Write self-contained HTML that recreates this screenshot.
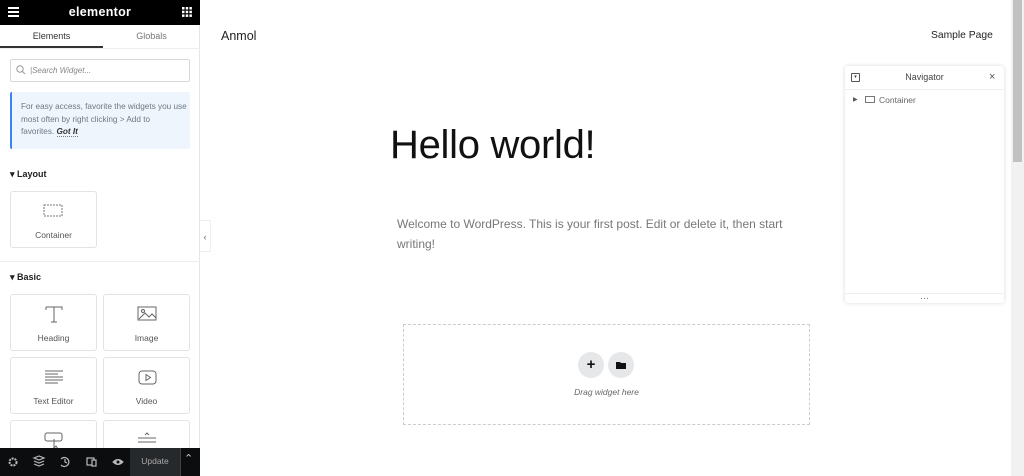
<!DOCTYPE html>
<html><head><style>
*{box-sizing:border-box;margin:0;padding:0}
body{width:1024px;height:476px;overflow:hidden;background:#fff;font-family:"Liberation Sans",sans-serif;position:relative;color:#333}
.a{position:absolute}
.card{position:absolute;width:87px;height:57px;border:1px solid #e3e3e3;border-radius:3px;background:#fff;text-align:center;font-size:8.5px;color:#555}
.card .l{position:absolute;left:0;right:0;top:38px}
.card svg{position:absolute;left:32px;top:8px}
</style></head><body>
<div class="a" style="left:0;top:0;width:200px;height:476px;background:#fff;border-right:1px solid #e6e6e6"></div>
<div class="a" style="left:0;top:0;width:200px;height:25px;background:#000"></div>
<div class="a" style="left:8px;top:7px;width:11px;height:2px;background:#fff;box-shadow:0 4px 0 #fff,0 8px 0 #fff"></div>
<div class="a" style="left:0;top:5px;width:200px;text-align:center;color:#fff;font-weight:bold;font-size:12.5px;letter-spacing:.3px">elementor</div>
<svg class="a" style="left:182px;top:7px" width="10" height="10"><g fill="#fff"><rect x="0" y="0" width="2.5" height="2.5"/><rect x="3.7" y="0" width="2.5" height="2.5"/><rect x="7.4" y="0" width="2.5" height="2.5"/><rect x="0" y="3.7" width="2.5" height="2.5"/><rect x="3.7" y="3.7" width="2.5" height="2.5"/><rect x="7.4" y="3.7" width="2.5" height="2.5"/><rect x="0" y="7.4" width="2.5" height="2.5"/><rect x="3.7" y="7.4" width="2.5" height="2.5"/><rect x="7.4" y="7.4" width="2.5" height="2.5"/></g></svg>
<div class="a" style="left:0;top:31px;width:103px;text-align:center;font-size:9px;color:#333">Elements</div>
<div class="a" style="left:103px;top:31px;width:97px;text-align:center;font-size:9px;color:#777">Globals</div>
<div class="a" style="left:0;top:46px;width:103px;height:2px;background:#333"></div>
<div class="a" style="left:0;top:48px;width:200px;height:1px;background:#eee"></div>
<div class="a" style="left:10px;top:59px;width:180px;height:23px;border:1px solid #d5d8dc;border-radius:2px"></div>
<svg class="a" style="left:16px;top:65px" width="10" height="10"><circle cx="4" cy="4" r="3.2" fill="none" stroke="#999" stroke-width="1"/><line x1="6.5" y1="6.5" x2="9" y2="9" stroke="#999"/></svg>
<div class="a" style="left:30px;top:66px;font-size:8px;color:#888;font-style:italic">|Search Widget...</div>
<div class="a" style="left:10px;top:92px;width:180px;height:57px;background:#eff5fd;border-left:2px solid #3e84f1;border-radius:2px"></div>
<div class="a" style="left:21px;top:101px;white-space:nowrap;font-size:8.2px;line-height:12.5px;color:#6d7882">For easy access, favorite the widgets you use<br>most often by right clicking &gt; Add to<br>favorites. <b style="color:#333;font-style:italic;border-bottom:1px dotted #3e84f1">Got It</b></div>
<div class="a" style="left:10px;top:169px;font-size:9px;font-weight:bold;color:#222">▾ Layout</div>
<div class="card" style="left:10px;top:191px"><svg width="22" height="14" style="left:32px;top:12px"><rect x="1" y="1" width="18" height="11" fill="none" stroke="#777" stroke-width="1" stroke-dasharray="2 1"/></svg><div class="l">Container</div></div>
<div class="a" style="left:0;top:261px;width:200px;height:1px;background:#eee"></div>
<div class="a" style="left:10px;top:272px;font-size:9px;font-weight:bold;color:#222">▾ Basic</div>
<div class="card" style="left:10px;top:294px"><svg width="22" height="20" style="left:32px;top:9px"><path d="M3 3H19V6M3 3V6M11 3V18M8 18H14" fill="none" stroke="#666" stroke-width="1"/></svg><div class="l">Heading</div></div>
<div class="card" style="left:103px;top:294px"><svg width="22" height="18" style="left:33px;top:10px"><rect x="1" y="2" width="18" height="13" fill="none" stroke="#666"/><path d="M2 14L8 8L12 12L15 9L19 13" fill="none" stroke="#666"/><circle cx="6" cy="6" r="1.5" fill="none" stroke="#666"/></svg><div class="l">Image</div></div>
<div class="card" style="left:10px;top:357px"><svg width="22" height="18" style="left:33px;top:11px"><path d="M1 2H19M1 5H14M1 8H19M1 11H19M1 14H14" stroke="#666" stroke-width="1"/></svg><div class="l">Text Editor</div></div>
<div class="card" style="left:103px;top:357px"><svg width="22" height="18" style="left:34px;top:11px"><rect x="1" y="2" width="17" height="13" rx="3" fill="none" stroke="#666"/><path d="M8 5.5L12.5 8.5L8 11.5Z" fill="none" stroke="#666"/></svg><div class="l">Video</div></div>
<div class="card" style="left:10px;top:420px;height:40px"><svg width="22" height="20" style="left:33px;top:10px"><rect x="1" y="2" width="17" height="8" rx="2" fill="none" stroke="#666"/><path d="M10 8V17L12 15L14 18" fill="none" stroke="#666"/></svg></div>
<div class="card" style="left:103px;top:420px;height:40px"><svg width="22" height="20" style="left:33px;top:9px"><path d="M1 8H19M1 12H19M8 5L10 3L12 5" fill="none" stroke="#666"/></svg></div>
<div class="a" style="left:0;top:448px;width:200px;height:28px;background:#0c0d0e"></div>
<div class="a" style="left:130px;top:448px;width:50px;height:28px;background:#26292c"></div>
<div class="a" style="left:130px;top:456px;width:50px;text-align:center;color:#aaa;font-size:8.5px">Update</div>
<div class="a" style="left:180px;top:448px;width:1px;height:28px;background:#444"></div>
<div class="a" style="left:184px;top:452px;color:#ccc;font-size:11px">⌃</div>
<svg class="a" style="left:0;top:448px" width="130" height="28"><g fill="#bbb" stroke="#bbb">
<circle cx="13" cy="14" r="3.5" stroke-width="2" fill="none" stroke-dasharray="2 1"/>
<path d="M34 10L39 8L44 10L39 12Z M34 13L39 15L44 13 M34 16L39 18L44 16" fill="none" stroke-width="1.2"/>
<path d="M61 11A4.5 4.5 0 1 1 61 17 M65 11V14L67 15" fill="none" stroke-width="1.2"/>
<rect x="87" y="10" width="7" height="7" fill="none" stroke-width="1.2"/><rect x="92" y="12" width="4" height="6" fill="#0c0d0e" stroke-width="1.2"/>
<path d="M113 14Q118 9 123 14Q118 19 113 14Z" stroke-width="1"/><circle cx="118" cy="14" r="1.5" fill="#0c0d0e" stroke="none"/>
</g></svg>
<div class="a" style="left:200px;top:220px;width:11px;height:32px;background:#fff;border:1px solid #eee;border-left:none;color:#666;font-size:9px;text-align:center;line-height:32px">‹</div>
<div class="a" style="left:221px;top:29px;font-size:12.5px;color:#222">Anmol</div>
<div class="a" style="left:931px;top:30px;font-size:10.3px;color:#222">Sample Page</div>
<div class="a" style="left:390px;top:123px;font-size:40px;color:#111;letter-spacing:-0.3px">Hello world!</div>
<div class="a" style="left:397px;top:214px;width:390px;font-size:12px;line-height:20px;color:#777">Welcome to WordPress. This is your first post. Edit or delete it, then start writing!</div>
<div class="a" style="left:403px;top:324px;width:407px;height:101px;border:1px dashed #ccc"></div>
<div class="a" style="left:578px;top:352px;width:26px;height:26px;border-radius:50%;background:#e6e7e8;text-align:center;line-height:26px;font-size:15px;font-weight:bold;color:#111">+</div>
<div class="a" style="left:608px;top:352px;width:26px;height:26px;border-radius:50%;background:#e6e7e8"></div>
<svg class="a" style="left:615px;top:359px" width="12" height="12"><path d="M1 3H5L6 4H11V10H1Z" fill="#111"/></svg>
<div class="a" style="left:403px;top:387px;width:407px;text-align:center;font-size:8.5px;font-style:italic;color:#666">Drag widget here</div>
<div class="a" style="left:845px;top:66px;width:159px;height:237px;background:#fff;border-radius:3px;box-shadow:0 0 4px rgba(0,0,0,.15)"></div>
<div class="a" style="left:845px;top:89px;width:159px;height:1px;background:#f0f0f0"></div>
<div class="a" style="left:845px;top:293px;width:159px;height:1px;background:#f0f0f0"></div>
<div class="a" style="left:851px;top:73px;width:9px;height:9px;border:1px solid #555;border-radius:1px;font-size:5px;text-align:center;line-height:7px">▾</div>
<div class="a" style="left:845px;top:72px;width:159px;text-align:center;font-size:9px;color:#444">Navigator</div>
<div class="a" style="left:989px;top:71px;font-size:11px;color:#555">×</div>
<div class="a" style="left:853px;top:96px;font-size:6px;color:#555">▶</div>
<div class="a" style="left:865px;top:96px;width:10px;height:7px;border:1px solid #777"></div>
<div class="a" style="left:879px;top:95px;font-size:8.5px;color:#666">Container</div>
<div class="a" style="left:845px;top:293px;width:159px;text-align:center;font-size:9px;color:#666">···</div>
<div class="a" style="left:1011px;top:0;width:13px;height:476px;background:#f1f1f1"></div>
<div class="a" style="left:1013px;top:0;width:9px;height:162px;background:#c1c1c1"></div>
</body></html>
